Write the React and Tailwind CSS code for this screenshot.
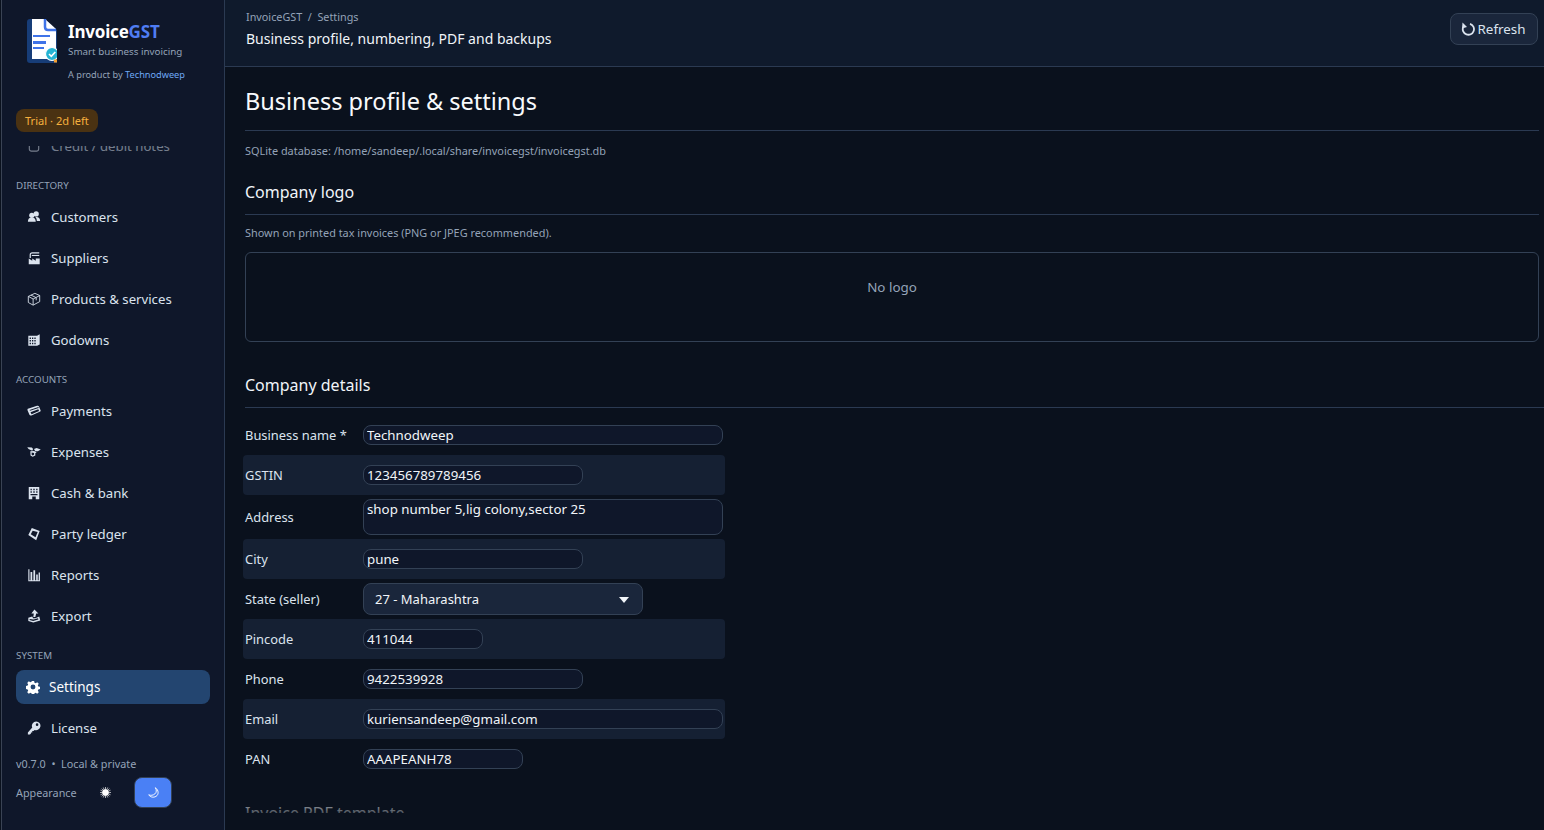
const icons = {
  customers: (
    <>
      <circle cx="5.500" cy="6" r="3" />
      <circle cx="10.500" cy="4.500" r="3" />
      <path d="M1 13.500c0-3.500 1.500-5 4.500-5s4.500 1.500 4.500 5z" />
      <path d="M9.500 8c3.500-.5 5.500 1 5.500 4.500h-3.800c0-1.800-.5-3.300-1.700-4.500z" />
    </>
  ),
  suppliers: (
    <>
      <path d="M2 15V8.500l4 2.500V8.500l4 2.500V8.500h4.500V15z" />
      <path d="M3 8V4.500C3 2.500 4.200 1.500 6 1.500h8v1.300H6C5 2.800 4.400 3.400 4.400 4.500V8z" />
      <path d="M5.500 4.500H14v1.200H5.500z" />
    </>
  ),
  products: (
    <g fill="none" stroke="currentColor" strokeWidth="1">
      <path d="M1.500 5 9 1.500 14.500 4v7L7 15 1.500 12z" />
      <path d="M1.500 5 7 8l7.500-4M7 8v7M4.500 3.500l6 3v3" />
    </g>
  ),
  godowns: (
    <path fillRule="evenodd" d="M1.500 3h10l3-1.500V13l-3 1.500h-10zM3 5v1.800h1.500V5zm2.700 0v1.800h1.500V5zm2.700 0v1.800h1.500V5zM3 8v1.800h1.500V8zm2.700 0v1.800h1.500V8zm2.700 0v1.800h1.500V8zM3 11v1.800h1.500V11zm2.700 0v1.800h1.500V11zm2.700 0v1.800h1.500V11z" />
  ),
  payments: (
    <path fillRule="evenodd" d="M1 5.500 11.500 2c1-.3 1.800 0 2.200.8l1.800 4.200c.3.800 0 1.500-1 1.900L5 13c-1 .4-1.800 0-2.200-.8L.7 7.500c-.3-.9-.2-1.700.3-2zm2 1.300.4 1L13.400 4.500 13 3.500zM4 9.400l1.200 2.200 8.600-3.600-.9-2z" />
  ),
  expenses: (
    <>
      <path d="M.3 2.500 5.500 2.800 7 4.500 6 6.500 3.500 5.500 1.800 4.500z" />
      <path d="M8 4.500 11 3.500 15.700 5.200 12.500 7 9.500 7z" />
      <path fillRule="evenodd" d="M3.800 7 8 6.800l3 1.400-1.500 1.300V12L6.500 13.500 4 12zM5.300 8.500v2.700l1.300.8 1.500-.8V9z" />
    </>
  ),
  cash: (
    <path fillRule="evenodd" d="M2 1h12v14h-4v-3H6v3H2zM4 3v1.800h1.500V3zm3.200 0v1.800h1.600V3zm3.300 0v1.800H12V3zM4 6v1.800h1.500V6zm3.200 0v1.800h1.600V6zm3.300 0v1.800H12V6zM4 9v1.500h8V9z" />
  ),
  ledger: (
    <path fillRule="evenodd" d="M5.500 1 14.500 4.500 10.500 15 1.500 9zm1 3.200L4.300 8.400l5.400 3.400 2.500-6z" />
  ),
  notes: (
    <path fillRule="evenodd" d="M2 2h12v9.500c0 2-1.500 3-3 3H5c-1.500 0-3-1-3-3zm1.300 1.300v8.200c0 1 .8 1.700 1.700 1.700h6c.9 0 1.700-.7 1.700-1.700V3.300z" />
  ),
  reports: (
    <path d="M1.500 1.500h1.300V14H4V4.500h2V14h1.300V2.500h2V14h1.200V7.500h1.800V14h1V5h1.500v10H1.500z" />
  ),
  export: (
    <>
      <path d="M8.500 .5 13 5h-2.500L9.500 9h-2.300l.6-3.800H5z" />
      <path d="M1.500 10 6 8.500 7 10.500h2.500L14 8.500l1.200 4.500-8 2.500-5.700-1.800zM3 11.300v1.200l4 1.200 6-1.700-.5-1.500L7.500 12z" fillRule="evenodd" />
    </>
  ),
  settings: (
    <path fillRule="evenodd" d="M6.700 1h2.600l.4 2 1.300.6 1.800-1.100 1.800 1.800-1.100 1.800.6 1.300 2 .4v2.600l-2 .4-.6 1.300 1.100 1.800-1.800 1.800-1.800-1.100-1.300.6-.4 2H6.700l-.4-2-1.300-.6-1.800 1.100-1.800-1.800 1.100-1.800-.6-1.300-2-.4V6.800l2-.4.6-1.300-1.100-1.800 1.800-1.800L5 2.600l1.300-.6zM8 5.200a2.800 2.800 0 1 0 0 5.600 2.800 2.800 0 0 0 0-5.600z" />
  ),
  license: (
    <path fillRule="evenodd" d="M10.500 .5a5 5 0 1 1-1.800 9.700L7.500 11.500H6V13H4.500v1.200L3.300 15.500H1v-2.300L6 7.500A5 5 0 0 1 10.500 .5zm1 2.200a1.500 1.500 0 1 0 0 3 1.500 1.500 0 0 0 0-3z" />
  ),
};

function NavIcon({ name }) {
  return (
    <svg viewBox="0 0 16 16" className="h-[14px] w-[14px] shrink-0" fill="currentColor">
      {icons[name]}
    </svg>
  );
}

function NavItem({ icon, label, active }) {
  if (active) {
    return (
      <div className="flex h-[34px] items-center gap-[9px] rounded-lg bg-[#234570] px-[10px] text-[13.500px] text-white">
        <NavIcon name={icon} />
        <span>{label}</span>
      </div>
    );
  }
  return (
    <div className="flex h-[41px] items-center gap-[10px] px-[11px] text-[#dbe3ee]">
      <NavIcon name={icon} />
      <span>{label}</span>
    </div>
  );
}

function NavLabel({ children, className }) {
  return <div className={"shrink-0 text-[9.800px] leading-4 text-[#94a3b8] " + className}>{children}</div>;
}

function Logo() {
  return (
    <svg viewBox="0 0 30 44" className="mt-[-1px] h-[44px] w-[30px] shrink-0">
      <path d="M3 0h15l12 11v33H3a3 3 0 0 1-3-3V3a3 3 0 0 1 3-3z" fill="#173d78" />
      <path d="M5 0h13l11 10v30H5z" fill="#fff" />
      <path d="M18 0v8c0 2 1 3 3 3h8" fill="none" stroke="#3f73e8" strokeWidth="2.500" />
      <rect x="6" y="16" width="17" height="2" fill="#3f73e8" />
      <rect x="6" y="22" width="13" height="3" fill="#3f73e8" />
      <rect x="6" y="28" width="11" height="2" fill="#3f73e8" />
      <circle cx="25" cy="35" r="6.500" fill="#25b4d3" stroke="#fff" strokeWidth="1.200" />
      <path d="m22 35 2.300 2.300 4-4.300" fill="none" stroke="#fff" strokeWidth="1.600" />
      <rect x="27" y="40.500" width="3" height="3" fill="#f59e2d" />
    </svg>
  );
}

function Sidebar() {
  return (
    <aside className="ml-px flex h-full w-[224px] shrink-0 flex-col border-x border-l-[#3a4354] border-r-[#2b3a52] bg-[#0f172a] text-[13.200px] leading-5">
      <div className="flex gap-[11px] pl-[25px] pt-5">
        <Logo />
        <div>
          <div className="text-[17px] font-bold leading-6 tracking-[-0.2px] text-white">
            Invoice<span className="text-[#4f7df3]">GST</span>
          </div>
          <div className="text-[9.800px] leading-4 text-[#94a3b8]">Smart business invoicing</div>
          <div className="mt-[7px] text-[9.200px] leading-4 text-[#94a3b8]">
            A product by <span className="text-[#6ea8f5]">Technodweep</span>
          </div>
        </div>
      </div>
      <div className="mt-[26px] pl-[14px]">
        <span className="inline-flex h-[23px] items-center rounded-lg bg-[#4a3212] px-[9px] text-[11.100px] text-[#f5b03e]">
          Trial · 2d left
        </span>
      </div>
      <nav className="mt-[14px] flex min-h-0 flex-1 flex-col justify-end overflow-hidden px-[14px] pb-px">
        <div className="flex shrink-0 items-center gap-[10px] px-[11px] pb-[22px] text-[#dbe3ee] opacity-50">
          <NavIcon name="notes" />
          <span>Credit / debit notes</span>
        </div>
        <NavLabel>DIRECTORY</NavLabel>
        <div className="mt-[2px] shrink-0">
          <NavItem icon="customers" label="Customers" />
          <NavItem icon="suppliers" label="Suppliers" />
          <NavItem icon="products" label="Products & services" />
          <NavItem icon="godowns" label="Godowns" />
        </div>
        <NavLabel className="mt-3">ACCOUNTS</NavLabel>
        <div className="mt-[2px] shrink-0">
          <NavItem icon="payments" label="Payments" />
          <NavItem icon="expenses" label="Expenses" />
          <NavItem icon="cash" label="Cash & bank" />
          <NavItem icon="ledger" label="Party ledger" />
          <NavItem icon="reports" label="Reports" />
          <NavItem icon="export" label="Export" />
        </div>
        <NavLabel className="mt-3">SYSTEM</NavLabel>
        <div className="mt-[6px] shrink-0">
          <NavItem icon="settings" label="Settings" active />
          <div className="mt-[3px]">
            <NavItem icon="license" label="License" />
          </div>
        </div>
      </nav>
      <div className="px-[14px] pb-[22px] pt-[5px] text-[10.800px] text-[#94a3b8]">
        <div className="leading-5">v0.7.0 &nbsp;•&nbsp; Local &amp; private</div>
        <div className="mt-[3px] flex h-[31px] items-center">
          <span className="w-[84px] pt-px">Appearance</span>
          <span className="flex w-[34px] justify-start text-white">
            <svg viewBox="0 0 12 12" className="h-[11px] w-[11px]" fill="currentColor">
              <circle cx="6" cy="6" r="3.500" />
              <path d="M6 0v12M0 6h12M1.800 1.800l8.400 8.400M1.800 10.200l8.400-8.400M3.500 .5l5 11M8.500 .5l-5 11M.5 3.500l11 5M.5 8.500l11-5" stroke="currentColor" strokeWidth=".7" />
            </svg>
          </span>
          <span className="flex h-[31px] w-[38px] items-center justify-center rounded-lg border border-[#334155] bg-[#4a80f5] text-white">
            <svg viewBox="0 0 12 12" className="h-[11px] w-[11px]" fill="none" stroke="currentColor" strokeWidth="1">
              <path d="M8 .8c1.500 2.500 1.500 5-.5 6.700S3 9.500 .8 8.500c1.500 2.500 5 3.500 8 1.700S12 3.500 8 .8z" />
            </svg>
          </span>
        </div>
      </div>
    </aside>
  );
}

function Row({ label, striped, tall, children }) {
  return (
    <div className={"flex items-center rounded-sm px-[2px] " + (tall ? "h-[44px] " : "h-10 ") + (striped ? "bg-[#152033]" : "")}>
      <label className="w-[118px] shrink-0 pt-px text-[12.900px] text-[#dbe3ee]">{label}</label>
      {children}
    </div>
  );
}

function Field({ value, className }) {
  return (
    <input
      readOnly
      value={value}
      className={"h-5 rounded-lg border border-[#334155] bg-[#0f172a] px-[3px] text-[13.300px] text-[#f1f5f9] outline-none " + className}
    />
  );
}

function SectionTitle({ children, className }) {
  return (
    <h2 className={"border-b border-[#2b3a52] pb-[10px] text-[16px] leading-6 text-[#f1f5f9] " + className}>{children}</h2>
  );
}

export default function App() {
  return (
    <div className="flex h-[830px] w-[1544px] overflow-hidden bg-[#0a111d] font-['Noto_Sans',sans-serif] text-[14px]">
      <Sidebar />
      <main className="flex min-w-0 flex-1 flex-col">
        <header className="flex h-[67px] shrink-0 items-start justify-between border-b border-[#2b3a52] bg-[#0f1a2c] pl-[21px] pr-[6px] pt-[9px]">
          <div>
            <div className="text-[10.800px] leading-4 text-[#94a3b8]">InvoiceGST &nbsp;/&nbsp; Settings</div>
            <div className="mt-1 text-[14px] leading-5 text-[#f1f5f9]">Business profile, numbering, PDF and backups</div>
          </div>
          <button className="mt-1 flex h-8 w-[88px] items-center justify-center gap-[3px] rounded-lg border border-[#334155] bg-[#1a263b] text-[13.400px] text-[#dbe3ee]">
            <svg viewBox="0 0 14 14" className="ml-[-2px] h-[14px] w-[14px]" fill="none" stroke="currentColor" strokeWidth="1.800">
              <path d="M9 1.800A5.600 5.600 0 1 1 2.200 5" />
              <path d="M1.500 .5 6 5 1 6.500z" fill="currentColor" stroke="none" />
            </svg>
            Refresh
          </button>
        </header>
        <div className="relative min-h-0 flex-1 overflow-hidden pb-[17px]">
          <div className="h-full overflow-hidden pl-5">
            <div className="w-[1300px]">
              <h1 className="mt-4 w-[1294px] border-b border-[#2b3a52] pb-[11px] text-[23.500px] leading-9 text-[#f8fafc]">
                Business profile &amp; settings
              </h1>
              <p className="mt-3 text-[10.900px] leading-4 text-[#94a3b8]">
                SQLite database: /home/sandeep/.local/share/invoicegst/invoicegst.db
              </p>
              <SectionTitle className="mt-[21px] w-[1294px]">Company logo</SectionTitle>
              <p className="mt-[10px] text-[10.900px] leading-4 text-[#94a3b8]">
                Shown on printed tax invoices (PNG or JPEG recommended).
              </p>
              <div className="mt-[11px] h-[90px] w-[1294px] rounded-md border border-[#334155] pt-[24px] text-center text-[13.400px] text-[#94a3b8]">
                No logo
              </div>
              <SectionTitle className="mt-[31px]">Company details</SectionTitle>
              <div className="ml-[-2px] mt-[7px] w-[482px]">
                <Row label="Business name *"><Field value="Technodweep" className="w-[360px]" /></Row>
                <Row label="GSTIN" striped><Field value="123456789789456" className="w-[220px]" /></Row>
                <Row label="Address" tall>
                  <div className="h-9 w-[360px] rounded-lg border border-[#334155] bg-[#0f172a] px-[3px] text-[13.300px] leading-[18px] text-[#f1f5f9]">
                    shop number 5,lig colony,sector 25
                  </div>
                </Row>
                <Row label="City" striped><Field value="pune" className="w-[220px]" /></Row>
                <Row label="State (seller)">
                  <div className="flex h-8 w-[280px] items-center justify-between rounded-lg border border-[#334155] bg-[#1a263b] pl-[11px] pr-[13px] pt-px text-[13px] text-[#f1f5f9]">
                    27 - Maharashtra
                    <svg viewBox="0 0 10 6" className="h-[6px] w-[10px]" fill="#f1f5f9"><path d="M0 0h10L5 6z" /></svg>
                  </div>
                </Row>
                <Row label="Pincode" striped><Field value="411044" className="w-[120px]" /></Row>
                <Row label="Phone"><Field value="9422539928" className="w-[220px]" /></Row>
                <Row label="Email" striped><Field value="kuriensandeep@gmail.com" className="w-[360px]" /></Row>
                <Row label="PAN"><Field value="AAAPEANH78" className="w-[160px]" /></Row>
              </div>
              <h2 className="mt-[22px] text-[16px] leading-6 text-[#f1f5f9]">Invoice PDF template</h2>
            </div>
          </div>
          <div className="absolute bottom-[17px] left-0 right-0 h-[12px] bg-gradient-to-b from-[#0a111d]/30 to-[#0a111d]/70" />
        </div>
      </main>
    </div>
  );
}
